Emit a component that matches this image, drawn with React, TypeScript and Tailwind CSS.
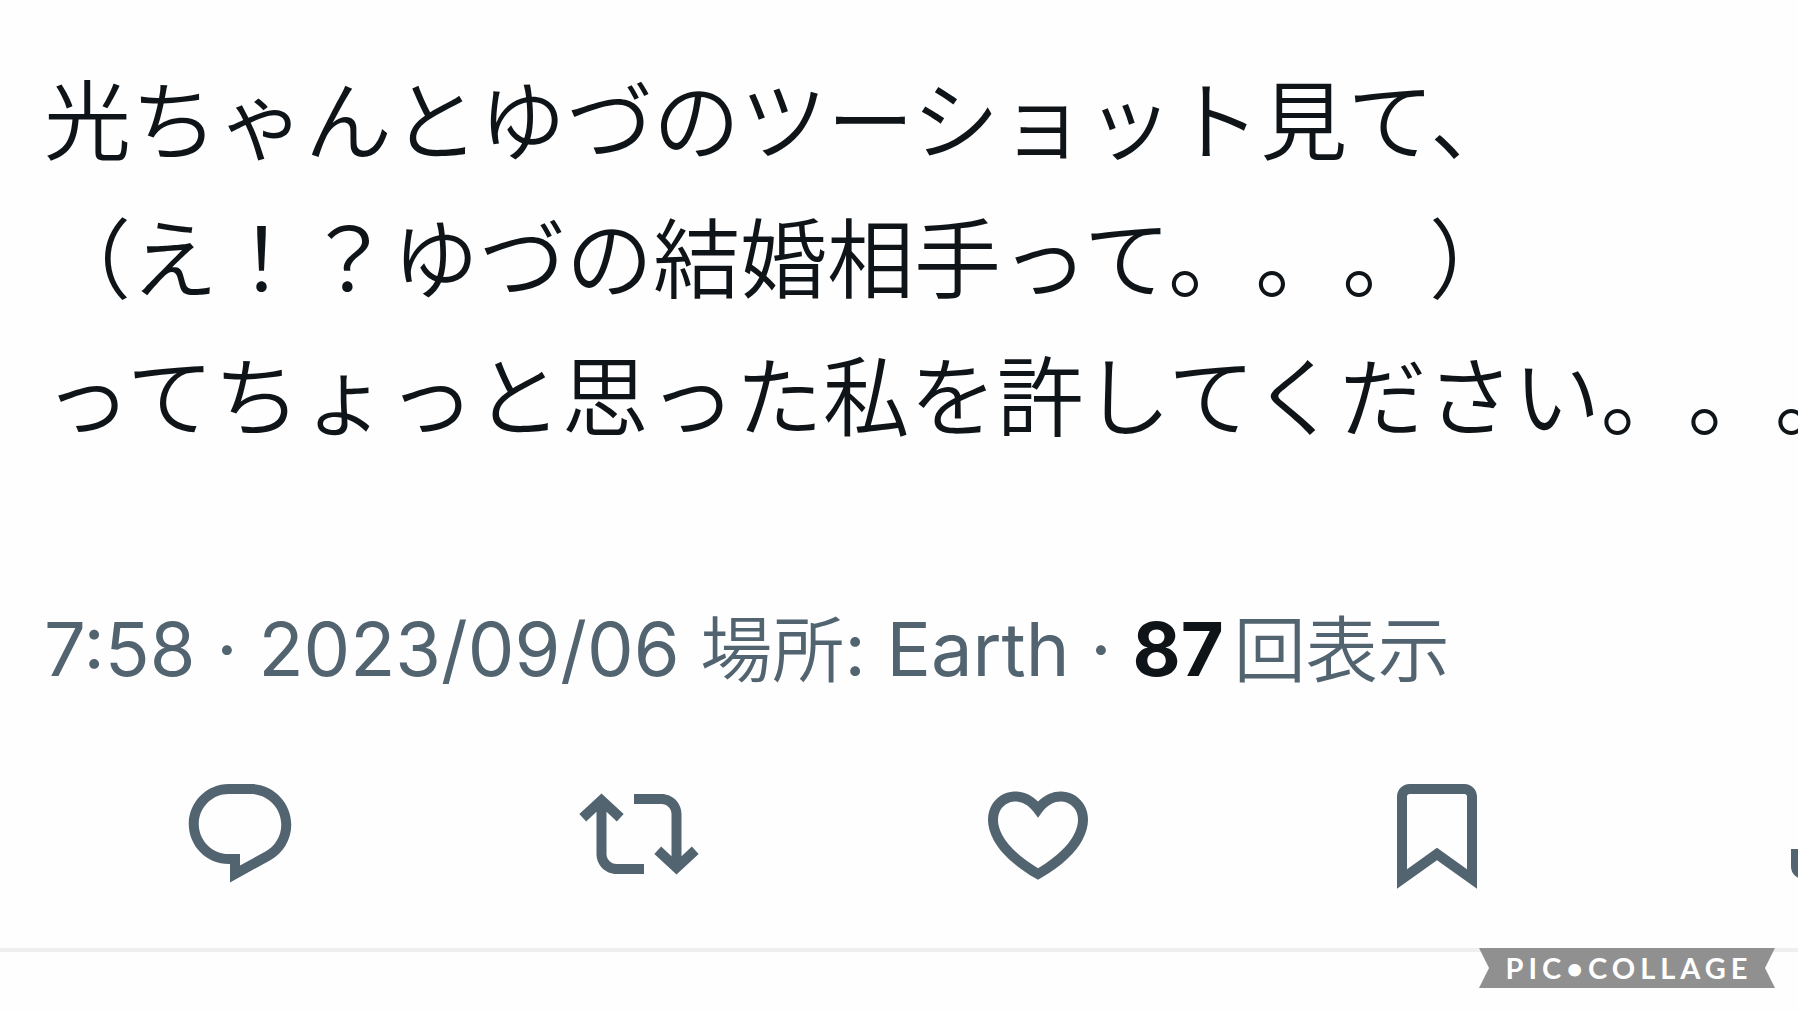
import type { ReactNode } from 'react';

const lines = [
  '光ちゃんとゆづのツーショット見て、',
  '（え！？ゆづの結婚相手って。。。）',
  'ってちょっと思った私を許してください。。。',
];

const actions = [
  {
    label: '返信',
    d: 'M1.751 10c0-4.42 3.584-8 8.005-8h4.366c4.49 0 8.129 3.64 8.129 8.13 0 2.96-1.607 5.68-4.196 7.11l-8.054 4.46v-3.69h-.067c-4.49.1-8.183-3.51-8.183-8.01zm8.005-6c-3.317 0-6.005 2.69-6.005 6 0 3.37 2.77 6.08 6.138 6.01l.351-.01h1.761v2.3l5.087-2.81c1.951-1.08 3.163-3.13 3.163-5.36 0-3.39-2.744-6.13-6.129-6.13H9.756z',
  },
  {
    label: 'リポスト',
    d: 'M4.5 3.88l4.432 4.14-1.364 1.46L5.5 7.55V16c0 1.1.896 2 2 2H13v2H7.5c-2.209 0-4-1.79-4-4V7.55L1.432 9.48.068 8.02 4.5 3.88zM16.5 6H11V4h5.5c2.209 0 4 1.79 4 4v8.45l2.068-1.93 1.364 1.46-4.432 4.14-4.432-4.14 1.364-1.46 2.068 1.93V8c0-1.1-.896-2-2-2z',
  },
  {
    label: 'いいね',
    d: 'M16.697 5.5c-1.222-.06-2.679.51-3.89 2.16l-.805 1.09-.806-1.09C9.984 6.01 8.526 5.44 7.304 5.5c-1.243.07-2.349.78-2.91 1.91-.552 1.12-.633 2.78.479 4.82 1.074 1.97 3.257 4.27 7.129 6.61 3.87-2.34 6.052-4.64 7.126-6.61 1.111-2.04 1.03-3.7.477-4.82-.561-1.13-1.666-1.84-2.908-1.91zm4.187 7.69c-1.351 2.48-4.001 5.12-8.379 7.67l-.503.3-.504-.3c-4.379-2.55-7.029-5.19-8.382-7.67-1.36-2.5-1.41-4.86-.514-6.67.887-1.79 2.647-2.91 4.601-3.01 1.651-.09 3.368.56 4.798 2.01 1.429-1.45 3.146-2.1 4.796-2.01 1.954.1 3.714 1.22 4.601 3.01.896 1.81.846 4.17-.514 6.67z',
  },
  {
    label: 'ブックマーク',
    d: 'M4 4.5C4 3.12 5.119 2 6.5 2h11C18.881 2 20 3.12 20 4.5v18.44l-8-5.71-8 5.71V4.5zM6.5 4c-.276 0-.5.22-.5.5v14.56l6-4.29 6 4.29V4.5c0-.28-.224-.5-.5-.5h-11z',
  },
  {
    label: '共有',
    d: 'M12 2.59l5.7 5.7-1.41 1.42L13 6.41V16h-2V6.41l-3.3 3.3-1.41-1.42L12 2.59zM21 15l-.02 3.51c0 1.38-1.12 2.49-2.5 2.49H5.5C4.11 21 3 19.88 3 18.5V15h2v3.5c0 .28.22.5.5.5h12.98c.28 0 .5-.22.5-.5L19 15h2z',
  },
];

function Muted({ children }: { children: ReactNode }) {
  return <span className="text-[72px] font-[350] font-['Noto_Sans_CJK_JP',sans-serif] leading-none">{children}</span>;
}

export default function App() {
  return (
    <main className="relative min-h-screen overflow-hidden bg-[#fefefe] font-['Inter','Noto_Sans_CJK_JP',sans-serif]">
      <article className="border-b-4 border-[#efefef] pt-[47px] pb-[54px] whitespace-nowrap">
        {/* 本文 */}
        <div className="pl-11 text-[87px] leading-[138px] font-[350] text-[#0f1419] font-['Noto_Sans_CJK_JP',sans-serif] [text-spacing-trim:space-all]">
          {lines.map(line => (
            <p key={line}>{line}</p>
          ))}
        </div>

        {/* 日時・場所・表示回数 */}
        <p className="mt-[140px] pl-11 text-[74px] leading-[96px] text-[#536471]">
          7:58 · 2023/09/06 <Muted>場所</Muted>: Earth · <strong className="mr-2.5 font-bold text-[#0f1419]">87</strong>
          <Muted>回表示</Muted>
        </p>

        {/* アクション */}
        <div className="mt-[77px] flex pl-10">
          {actions.map(({ label, d }) => (
            <div key={label} className="flex w-[399px] shrink-0 justify-center">
              <button type="button" aria-label={label} className="text-[#536471]">
                <svg viewBox="0 0 24 24" className="size-[120px]" fill="currentColor" aria-hidden="true">
                  <path d={d} />
                </svg>
              </button>
            </div>
          ))}
        </div>
      </article>

      <div className="absolute right-[23px] bottom-[23px] flex h-10 w-[296px] items-center justify-center bg-[#909090] pl-1 text-[29px] leading-10 font-bold tracking-[5px] text-white font-['Lato',sans-serif] [clip-path:polygon(0_0,100%_0,calc(100%_-_10px)_50%,100%_100%,0_100%,10px_50%)]">
        PIC•COLLAGE
      </div>
    </main>
  );
}
